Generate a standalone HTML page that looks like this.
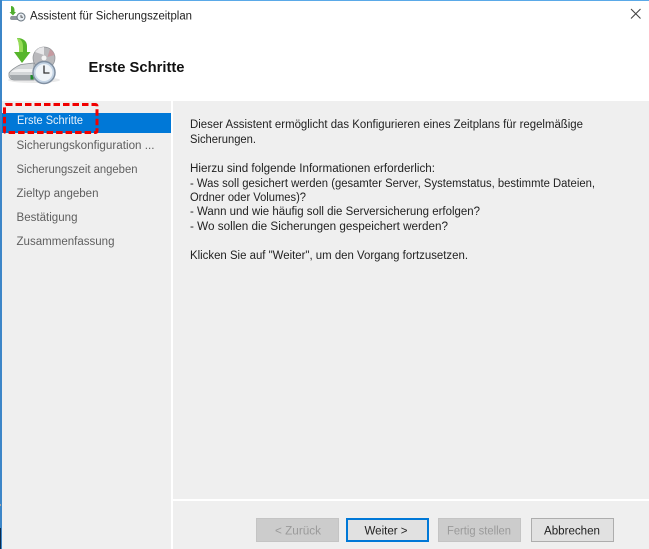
<!DOCTYPE html>
<html><head><meta charset="utf-8"><style>
html,body{margin:0;padding:0;background:#fff}
#r{position:relative;width:649px;height:549px;overflow:hidden;background:#fff;font-family:"Liberation Sans",sans-serif}
#r div{position:absolute}
svg{position:absolute;left:0;top:0;filter:blur(.25px)}
text{font-family:"Liberation Sans",sans-serif;font-size:11.5px;fill:#222}
.b{box-sizing:border-box;height:24px;top:518px;width:83px;background:#e1e1e1;border:1px solid #adadad}
.d{background:#ccc;border-color:#c4c4c4}
</style></head><body><div id="r">
<div style="left:0;top:0;width:649px;height:1px;background:#5aa9e8"></div>
<div style="left:0;top:0;width:2px;height:549px;background:#3c86c8"></div>
<div style="left:0;top:528px;width:1px;height:21px;background:#0c2a4a"></div>
<div style="left:0;top:504px;width:1px;height:2px;background:#aaa"></div>
<div style="left:2px;top:101px;width:169px;height:448px;background:#efefef"></div>
<div style="left:173px;top:101px;width:476px;height:398px;background:#efefef"></div>
<div style="left:173px;top:501px;width:476px;height:48px;background:#efefef"></div>
<div style="left:2px;top:113px;width:169px;height:20px;background:#0078d7"></div>
<div class="b d" style="left:256px"></div>
<div class="b" style="left:346px;border:2px solid #0078d7"></div>
<div class="b d" style="left:438px"></div>
<div class="b" style="left:531px"></div>
<svg width="649" height="549" viewBox="0 0 649 549">
<!-- title icon -->
<path d="M11 6c2 0 3.500 1.500 3.500 4v2H16l-3 3.500L9.500 12H11z" fill="#4fae2e"/>
<path d="M11 16h8v4h-7c-1.500 0-2-1-2-2z" fill="#8d969d"/>
<circle cx="21" cy="17" r="4" fill="#e6ecf2" stroke="#66727c"/>
<path d="M21 15v2.200h2" fill="none" stroke="#444" stroke-width=".8"/>
<text x="30" y="19.500" textLength="162" lengthAdjust="spacingAndGlyphs" style="font-size:11.500px">Assistent für Sicherungszeitplan</text>
<path d="M631 9l9.500 9.500M640.500 9L631 18.500" stroke="#444" stroke-width="1.100" fill="none"/>
<!-- main icon -->
<ellipse cx="34" cy="80" rx="26" ry="3" fill="#e4e4e4" opacity=".8"/>
<path d="M9 73c2-3 8-7 12-8.500L34 63v17H14c-3 0-5-2-5-4z" fill="#d3d6d8" stroke="#8a8f93" stroke-width=".8"/>
<path d="M11 72c2-2 5-3 9-3h13v3H18c-3 0-5 0-7 0z" fill="#f0f1f2"/>
<path d="M10 75h24v5H14c-2 0-4-2-4-5z" fill="#a2a7ab"/>
<rect x="30.500" y="75" width="3" height="4.500" fill="#1f8a2a"/>
<circle cx="44" cy="58" r="11" fill="#b9b9bc" stroke="#8f9296" stroke-width=".7"/>
<path d="M35 52a11 11 0 0 1 9-5v8z" fill="#e8e8ea"/>
<path d="M50 49a11 11 0 0 1 4.500 6l-7 2z" fill="#c59aa0"/>
<circle cx="44" cy="58" r="2.500" fill="#f4f4f4"/>
<circle cx="44" cy="72.500" r="11" fill="#c3d3e4" stroke="#7f8ea0" stroke-width="1.500"/>
<circle cx="44" cy="72.500" r="8.500" fill="#f0f4f8"/>
<path d="M44 65.500v7.500h5.500" fill="none" stroke="#333" stroke-width="1.300"/>
<path d="M17 38c6 0 10 3 10 8v6h3.500L22 63 14 52h5v-5c0-4-1-6-2-9z" fill="#57b52c"/>
<path d="M17 38c5 1 6 5 6 9v5h-4v-5c0-4-1-6-2-9z" fill="#96dc56"/>
<text x="88.500" y="72" textLength="96" lengthAdjust="spacingAndGlyphs" style="font-size:14.500px;font-weight:bold;fill:#111">Erste Schritte</text>
<!-- sidebar -->
<text x="17" y="124" textLength="66" lengthAdjust="spacingAndGlyphs" style="fill:#e8f2fb">Erste Schritte</text>
<text x="16.500" y="149" textLength="138" lengthAdjust="spacingAndGlyphs" style="fill:#5f5f5f">Sicherungskonfiguration ...</text>
<text x="16.500" y="173" textLength="121" lengthAdjust="spacingAndGlyphs" style="fill:#5f5f5f">Sicherungszeit angeben</text>
<text x="16.500" y="197" textLength="82" lengthAdjust="spacingAndGlyphs" style="fill:#5f5f5f">Zieltyp angeben</text>
<text x="16.500" y="221" textLength="61" lengthAdjust="spacingAndGlyphs" style="fill:#5f5f5f">Bestätigung</text>
<text x="16.500" y="245" textLength="98" lengthAdjust="spacingAndGlyphs" style="fill:#5f5f5f">Zusammenfassung</text>
<!-- body -->
<text x="190" y="128" textLength="393" lengthAdjust="spacingAndGlyphs">Dieser Assistent ermöglicht das Konfigurieren eines Zeitplans für regelmäßige</text>
<text x="190" y="143" textLength="66" lengthAdjust="spacingAndGlyphs">Sicherungen.</text>
<text x="190" y="172" textLength="245" lengthAdjust="spacingAndGlyphs">Hierzu sind folgende Informationen erforderlich:</text>
<text x="190" y="187" textLength="405" lengthAdjust="spacingAndGlyphs">- Was soll gesichert werden (gesamter Server, Systemstatus, bestimmte Dateien,</text>
<text x="190" y="201" textLength="116" lengthAdjust="spacingAndGlyphs">Ordner oder Volumes)?</text>
<text x="190" y="215" textLength="290" lengthAdjust="spacingAndGlyphs">- Wann und wie häufig soll die Serversicherung erfolgen?</text>
<text x="190" y="230" textLength="258" lengthAdjust="spacingAndGlyphs">- Wo sollen die Sicherungen gespeichert werden?</text>
<text x="190" y="259" textLength="278" lengthAdjust="spacingAndGlyphs">Klicken Sie auf "Weiter", um den Vorgang fortzusetzen.</text>
<!-- buttons -->
<text x="275" y="534.500" textLength="46" lengthAdjust="spacingAndGlyphs" style="fill:#9a9a9a">&lt; Zurück</text>
<text x="364.500" y="534.500" textLength="43" lengthAdjust="spacingAndGlyphs">Weiter &gt;</text>
<text x="447" y="534.500" textLength="64" lengthAdjust="spacingAndGlyphs" style="fill:#9a9a9a">Fertig stellen</text>
<text x="544" y="534.500" textLength="56" lengthAdjust="spacingAndGlyphs">Abbrechen</text>
<!-- red dashed -->
<rect x="4.500" y="104.500" width="92.500" height="28" fill="none" stroke="#f00000" stroke-width="3" stroke-dasharray="6.500 3" rx="1.500"/>
</svg>
</div></body></html>
